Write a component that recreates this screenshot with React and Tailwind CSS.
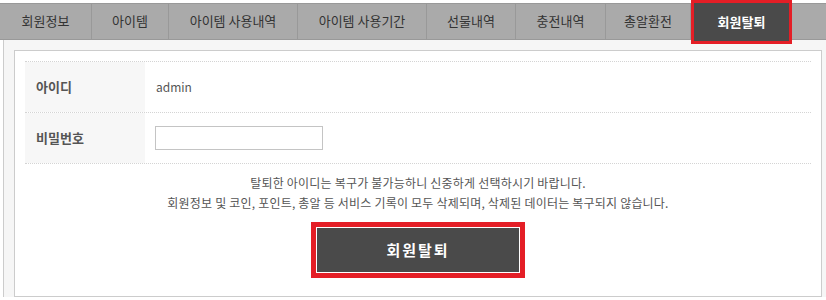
const tabs = [
    { label: '회원정보', w: 'w-[92px]' },
    { label: '아이템', w: 'w-[77px]' },
    { label: '아이템 사용내역', w: 'w-[129px]' },
    { label: '아이템 사용기간', w: 'w-[129px]' },
    { label: '선물내역', w: 'w-[89px]' },
    { label: '충전내역', w: 'w-[90px]' },
    { label: '총알환전', w: 'w-[85px]' },
];

export default function App() {
    return (
        <div className="w-[826px] h-[300px] overflow-hidden bg-white font-['Noto_Sans_CJK_KR','Noto_Sans',sans-serif]">
            {/* Tabs */}
            <div className="relative z-10 mt-[3px] flex h-[37px] border-t border-b border-[#999] bg-[#aaaaaa]">
                {tabs.map((t) => (
                    <div
                        key={t.label}
                        className={`${t.w} flex shrink-0 items-center justify-center border-r border-[#999] pb-[1px] text-[13px] text-[#333]`}
                    >
                        {t.label}
                    </div>
                ))}
                <div className="-mt-[4px] flex h-[44px] w-[101px] shrink-0 items-center justify-center self-start border-[3px] border-[#e41e26] bg-[#4a4a4a] text-[13px] font-bold text-white">
                    회원탈퇴
                </div>
            </div>

            {/* Body */}
            <div className="ml-[3px] w-[840px] border-l border-r border-[#ccc] bg-[#f6f6f6] px-[10px] pt-[10px]">
                <div className="w-[808px] border border-[#ccc] bg-white px-[10px] pt-[10px] pb-[18px]">
                    <div className="border-b border-dotted border-[#d4d4d4]">
                        <div className="flex h-[51px] border-t border-dotted border-[#d4d4d4]">
                            <div className="flex w-[120px] items-center bg-[#f7f7f7] pl-[11px] text-[13px] font-bold text-[#555]">
                                아이디
                            </div>
                            <div className="flex items-center pl-[11px] text-[12px] text-[#555]">admin</div>
                        </div>
                        <div className="flex h-[51px] border-t border-dotted border-[#d4d4d4]">
                            <div className="flex w-[120px] items-center bg-[#f7f7f7] pl-[11px] text-[13px] font-bold text-[#555]">
                                비밀번호
                            </div>
                            <div className="flex items-center pl-[10px]">
                                <input type="password" className="h-[24px] w-[168px] border border-[#c4c4c4] bg-white" />
                            </div>
                        </div>
                    </div>

                    <div className="mt-[9px] text-center text-[12px] leading-[20px] tracking-[0.2px] text-[#555]">
                        <p>탈퇴한 아이디는 복구가 불가능하니 신중하게 선택하시기 바랍니다.</p>
                        <p>회원정보 및 코인, 포인트, 총알 등 서비스 기록이 모두 삭제되며, 삭제된 데이터는 복구되지 않습니다.</p>
                    </div>

                    <div className="mt-[9px] flex justify-center">
                        <button className="h-[56px] w-[214px] border-[5px] border-[#e41e26] bg-[#e41e26]">
                            <div className="flex h-full w-full items-center justify-center border border-white bg-[#4a4a4a] text-[15px] font-bold tracking-[2px] text-white">
                                회원탈퇴
                            </div>
                        </button>
                    </div>
                </div>
            </div>
        </div>
    );
}
